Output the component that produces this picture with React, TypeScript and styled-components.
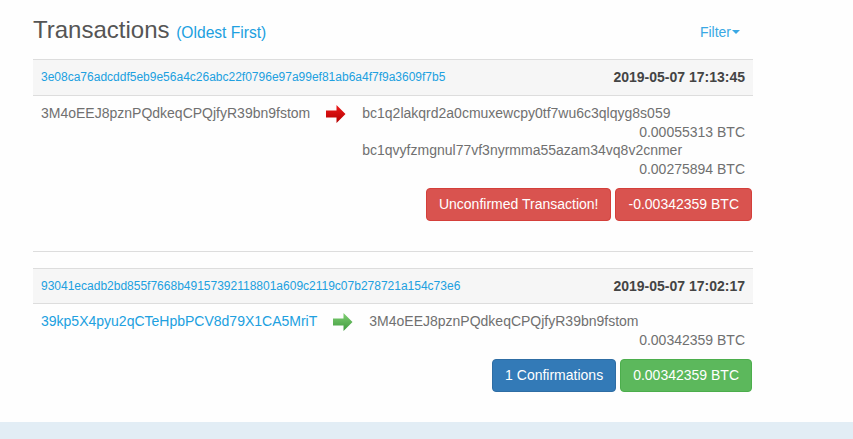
import React from 'react';
import styled, { createGlobalStyle } from 'styled-components';

const GlobalStyle = createGlobalStyle`
  body {
    margin: 0;
    background: #fefefe;
    font-family: "Liberation Sans", Arial, sans-serif;
    font-size: 14px;
    color: #707070;
  }
`;

const Page = styled.div`
  display: flex;
  flex-direction: column;
  min-height: 439px;
`;

const Content = styled.div`
  width: 720px;
  margin-left: 33px;
  flex: 1;
`;

const Header = styled.div`
  display: flex;
  align-items: center;
  justify-content: space-between;
  padding-top: 17px;
  margin-bottom: 16px;
`;

const Title = styled.h3`
  margin: 0;
  font-size: 24px;
  font-weight: 400;
  line-height: 1.1;
  color: #555;
`;

const Sub = styled.small`
  font-size: 15.6px;
  color: #20a0e0;
`;

const FilterLink = styled.a`
  display: flex;
  align-items: center;
  margin-right: 13px;
  margin-top: 4px;
  color: #3aa8e4;
  cursor: pointer;
`;

const Caret = styled.span`
  width: 0;
  height: 0;
  border-left: 4px solid transparent;
  border-right: 4px solid transparent;
  border-top: 4px solid #3aa8e4;
  margin-left: 1px;
`;

const Tx = styled.div`
  margin-bottom: 30px;
`;

const TxHead = styled.div`
  display: flex;
  align-items: center;
  justify-content: space-between;
  padding: 8px;
  background: #f6f6f6;
  border-top: 1px solid #dddddd;
  border-bottom: 1px solid #dddddd;
  line-height: 18.6px;
`;

const Hash = styled.a`
  font-size: 12px;
  color: #20a0e0;
`;

const Time = styled.span`
  font-weight: 700;
  color: #444;
`;

const TxBody = styled.div`
  display: flex;
  align-items: flex-start;
  line-height: 18.67px;
`;

const Cell = styled.div<{ $grow?: boolean }>`
  padding: 8px;
  flex: ${(p) => (p.$grow ? 1 : 'none')};
`;

const ArrowCell = styled.div`
  padding: 9px 8px 0;
`;

const Addr = styled.div<{ $link?: boolean }>`
  color: ${(p) => (p.$link ? '#20a0e0' : '#707070')};
`;

const Amount = styled.div`
  text-align: right;
`;

const Actions = styled.div`
  display: flex;
  justify-content: flex-end;
  gap: 4px;
  padding: 1px 1px 0 0;
`;

const Btn = styled.span<{ $kind: 'danger' | 'primary' | 'success' }>`
  display: inline-block;
  padding: 6px 12px;
  line-height: 19px;
  border-radius: 4px;
  color: #fff;
  background: ${(p) => ({ danger: '#d9534f', primary: '#337ab7', success: '#5cb85c' })[p.$kind]};
  border: 1px solid ${(p) => ({ danger: '#d43f3a', primary: '#2e6da4', success: '#4cae4c' })[p.$kind]};
`;

const Separator = styled.hr`
  border: 0;
  border-top: 1px solid #dddddd;
  margin: 0 0 16px;
`;

const Footer = styled.div`
  height: 17px;
  background: #e2edf5;
`;

const Arrow = ({ color }: { color: 'red' | 'green' }) => {
  const stops = color === 'red' ? ['#ee1b1b', '#b30000'] : ['#7fcf72', '#3f9a3f'];
  return (
    <svg width="20" height="18" viewBox="0 0 20 18">
      <defs>
        <linearGradient id={`g-${color}`} x1="0" y1="0" x2="0" y2="1">
          <stop offset="0" stopColor={stops[0]} />
          <stop offset="1" stopColor={stops[1]} />
        </linearGradient>
      </defs>
      <path d="M0 5.5H10.5V0L19.5 9L10.5 18V12.5H0Z" fill={`url(#g-${color})`} />
    </svg>
  );
};

interface Output {
  address: string;
  amount: string;
}

interface TxProps {
  hash: string;
  time: string;
  from: string;
  fromLink?: boolean;
  outputs: Output[];
  direction: 'red' | 'green';
  status: string;
  statusKind: 'danger' | 'primary';
  total: string;
  totalKind: 'danger' | 'success';
}

const Transaction: React.FC<TxProps> = (tx) => (
  <Tx>
    <TxHead>
      <Hash>{tx.hash}</Hash>
      <Time>{tx.time}</Time>
    </TxHead>
    <TxBody>
      <Cell>
        <Addr $link={tx.fromLink}>{tx.from}</Addr>
      </Cell>
      <ArrowCell>
        <Arrow color={tx.direction} />
      </ArrowCell>
      <Cell $grow>
        {tx.outputs.map((o) => (
          <div key={o.address}>
            <Addr>{o.address}</Addr>
            <Amount>{o.amount}</Amount>
          </div>
        ))}
      </Cell>
    </TxBody>
    <Actions>
      <Btn $kind={tx.statusKind}>{tx.status}</Btn>
      <Btn $kind={tx.totalKind}>{tx.total}</Btn>
    </Actions>
  </Tx>
);

export default function App() {
  return (
    <Page>
      <GlobalStyle />
      <Content>
        <Header>
          <Title>
            Transactions <Sub>(Oldest First)</Sub>
          </Title>
          <FilterLink>
            Filter
            <Caret />
          </FilterLink>
        </Header>
        <Transaction
          hash="3e08ca76adcddf5eb9e56a4c26abc22f0796e97a99ef81ab6a4f7f9a3609f7b5"
          time="2019-05-07 17:13:45"
          from="3M4oEEJ8pznPQdkeqCPQjfyR39bn9fstom"
          outputs={[
            { address: 'bc1q2lakqrd2a0cmuxewcpy0tf7wu6c3qlqyg8s059', amount: '0.00055313 BTC' },
            { address: 'bc1qvyfzmgnul77vf3nyrmma55azam34vq8v2cnmer', amount: '0.00275894 BTC' },
          ]}
          direction="red"
          status="Unconfirmed Transaction!"
          statusKind="danger"
          total="-0.00342359 BTC"
          totalKind="danger"
        />
        <Separator />
        <Transaction
          hash="93041ecadb2bd855f7668b49157392118801a609c2119c07b278721a154c73e6"
          time="2019-05-07 17:02:17"
          from="39kp5X4pyu2qCTeHpbPCV8d79X1CA5MriT"
          fromLink
          outputs={[{ address: '3M4oEEJ8pznPQdkeqCPQjfyR39bn9fstom', amount: '0.00342359 BTC' }]}
          direction="green"
          status="1 Confirmations"
          statusKind="primary"
          total="0.00342359 BTC"
          totalKind="success"
        />
      </Content>
      <Footer />
    </Page>
  );
}
